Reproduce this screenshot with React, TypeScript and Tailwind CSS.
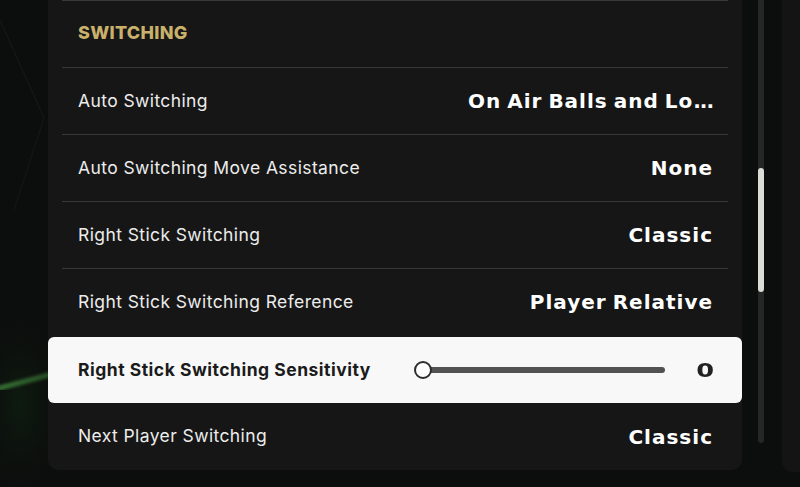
import React from "react";

const rows = [
  { label: "Auto Switching", value: "On Air Balls and Lo", dots: true },
  { label: "Auto Switching Move Assistance", value: "None" },
  { label: "Right Stick Switching", value: "Classic" },
  { label: "Right Stick Switching Reference", value: "Player Relative" },
];

const labelFont = { fontFamily: "Inter, 'Noto Sans', sans-serif" };
const valueFont = { fontFamily: "'DejaVu Sans', 'Liberation Sans', sans-serif" };

function Row({ label, value, dots, border = true }: { label: string; value: string; dots?: boolean; border?: boolean }) {
  return (
    <div
      className={
        border
          ? "mx-[14px] h-[67px] border-t border-[#383838] flex items-center pl-[16px] pr-[15px]"
          : "mx-[14px] h-[67px] flex items-center pl-[16px] pr-[15px]"
      }
    >
      <span className="flex-1 text-[17.5px] text-[#ececec] tracking-[0.4px]" style={labelFont}>
        {label}
      </span>
      <span
        className="text-[20px] font-bold text-white tracking-[1px] [word-spacing:-2px]"
        style={valueFont}
      >
        {value}
        {dots ? <span className="tracking-[-1px]">...</span> : null}
      </span>
    </div>
  );
}

export default function App() {
  return (
    <div className="relative w-[800px] h-[487px] overflow-hidden bg-[#0c0d0d]">
      <svg className="absolute inset-0" width="800" height="487" viewBox="0 0 800 487">
        <defs>
          <linearGradient id="g1" x1="0" y1="0" x2="1" y2="0">
            <stop offset="0" stopColor="#3a7a36" stopOpacity="0.9" />
            <stop offset="1" stopColor="#3a7a36" stopOpacity="0.5" />
          </linearGradient>
          <radialGradient id="g2" cx="0.2" cy="0.6" r="0.6">
            <stop offset="0" stopColor="#0e2410" stopOpacity="0.6" />
            <stop offset="1" stopColor="#0c0d0d" stopOpacity="0" />
          </radialGradient>
          <filter id="blur1">
            <feGaussianBlur stdDeviation="1.5" />
          </filter>
        </defs>
        <rect x="0" y="280" width="100" height="207" fill="url(#g2)" />
        <path d="M0 388 L60 372" stroke="url(#g1)" strokeWidth="5" strokeLinecap="round" filter="url(#blur1)" />
        <path d="M0 20 L44 118" stroke="#1a1a1a" strokeWidth="1" />
        <path d="M44 118 L14 210" stroke="#171717" strokeWidth="1" />
      </svg>

      {/* main panel */}
      <div className="absolute left-[48px] top-0 w-[694px] h-[470px] rounded-b-[10px] bg-[#161616] flex flex-col">
        <div className="mx-[14px] h-[67px] border-t border-[#383838] flex items-center pl-[16px] pb-[4px]">
          <span
            className="text-[18px] font-extrabold text-[#c9b16c] tracking-[0.3px]"
            style={labelFont}
          >
            SWITCHING
          </span>
        </div>
        {rows.map((r) => (
          <Row key={r.label} label={r.label} value={r.value} dots={r.dots} />
        ))}
        <div className="mt-[2px] h-[66px] rounded-[6px] bg-[#f8f8f8] flex items-center pl-[30px] pr-[28px]">
          <span
            className="w-[336px] text-[17.5px] font-bold text-[#1b1b1b] tracking-[0.5px]"
            style={labelFont}
          >
            Right Stick Switching Sensitivity
          </span>
          <div className="relative w-[260px] h-[18px] flex items-center">
            <div className="ml-[9px] w-[242px] h-[6px] rounded-full bg-[#525252]" />
            <div className="absolute left-0 top-0 w-[18px] h-[18px] rounded-full bg-white border-[2px] border-[#2e2e2e]" />
          </div>
          <span
            className="flex-1 text-right text-[19px] font-bold text-[#222] leading-none"
            style={valueFont}
          >
            <span className="inline-block scale-x-[1.35] origin-right">0</span>
          </span>
        </div>
        <Row label="Next Player Switching" value="Classic" border={false} />
      </div>

      {/* scrollbar */}
      <div className="absolute left-[758px] top-0 w-[6px] h-[443px] rounded-b-full bg-[#262626]">
        <div className="absolute left-0 top-[168px] w-[6px] h-[124px] rounded-full bg-[#dcdcd6]" />
      </div>

      {/* next panel edge */}
      <div className="absolute left-[782px] top-0 w-[40px] h-[472px] rounded-bl-[10px] bg-[#141414]" />
    </div>
  );
}
